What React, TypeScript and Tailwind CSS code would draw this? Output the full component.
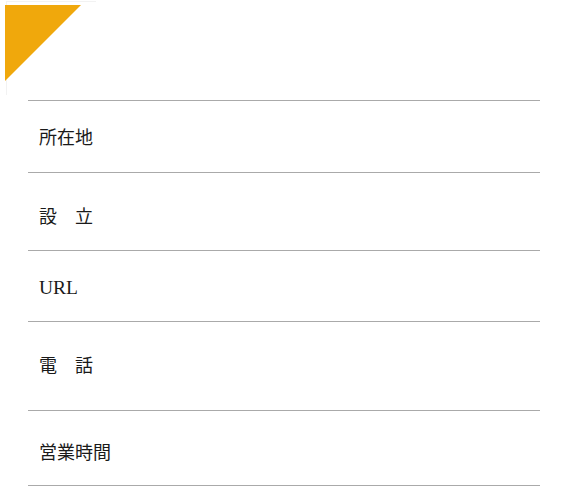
import React from "react";

const ROWS = [
  { label: "所在地", h: "h-[72px]", pt: "pt-[3px]", size: "text-[18px]" },
  { label: "設\u3000立", h: "h-[78px]", pt: "pt-[10px]", size: "text-[18px]" },
  { label: "URL", h: "h-[71px]", pt: "pt-[4px]", size: "text-[19.5px]" },
  { label: "電\u3000話", h: "h-[89px]", pt: "pt-[0px]", size: "text-[18px]" },
  { label: "営業時間", h: "h-[75px]", pt: "pt-[9px]", size: "text-[18px]" },
];

export default function App() {
  return (
    <main className="relative min-h-[486px] w-[581px] bg-white font-['Liberation_Serif','Noto_Sans_CJK_JP',serif] text-[#1a1a1a]">
      {/* corner ribbon */}
      <div className="absolute left-[6px] top-[1px] h-[94px] w-[90px] border-l border-t border-[#f2f2f2]" />
      <svg className="absolute left-[5px] top-[5px]" width="76" height="76" viewBox="0 0 76 76">
        <polygon points="0,0 76,0 0,76" fill="#f0a80c" />
      </svg>

      <div className="pt-[100px] pl-[28px] w-[540px]">
        <dl className="border-t border-[#aaa]">
          {ROWS.map((r) => (
            <div key={r.label} className={`${r.h} ${r.pt} flex items-center border-b border-[#aaa] pl-[11px]`}>
              <dt className={`${r.size} leading-none`}>{r.label}</dt>
            </div>
          ))}
        </dl>
      </div>
    </main>
  );
}
